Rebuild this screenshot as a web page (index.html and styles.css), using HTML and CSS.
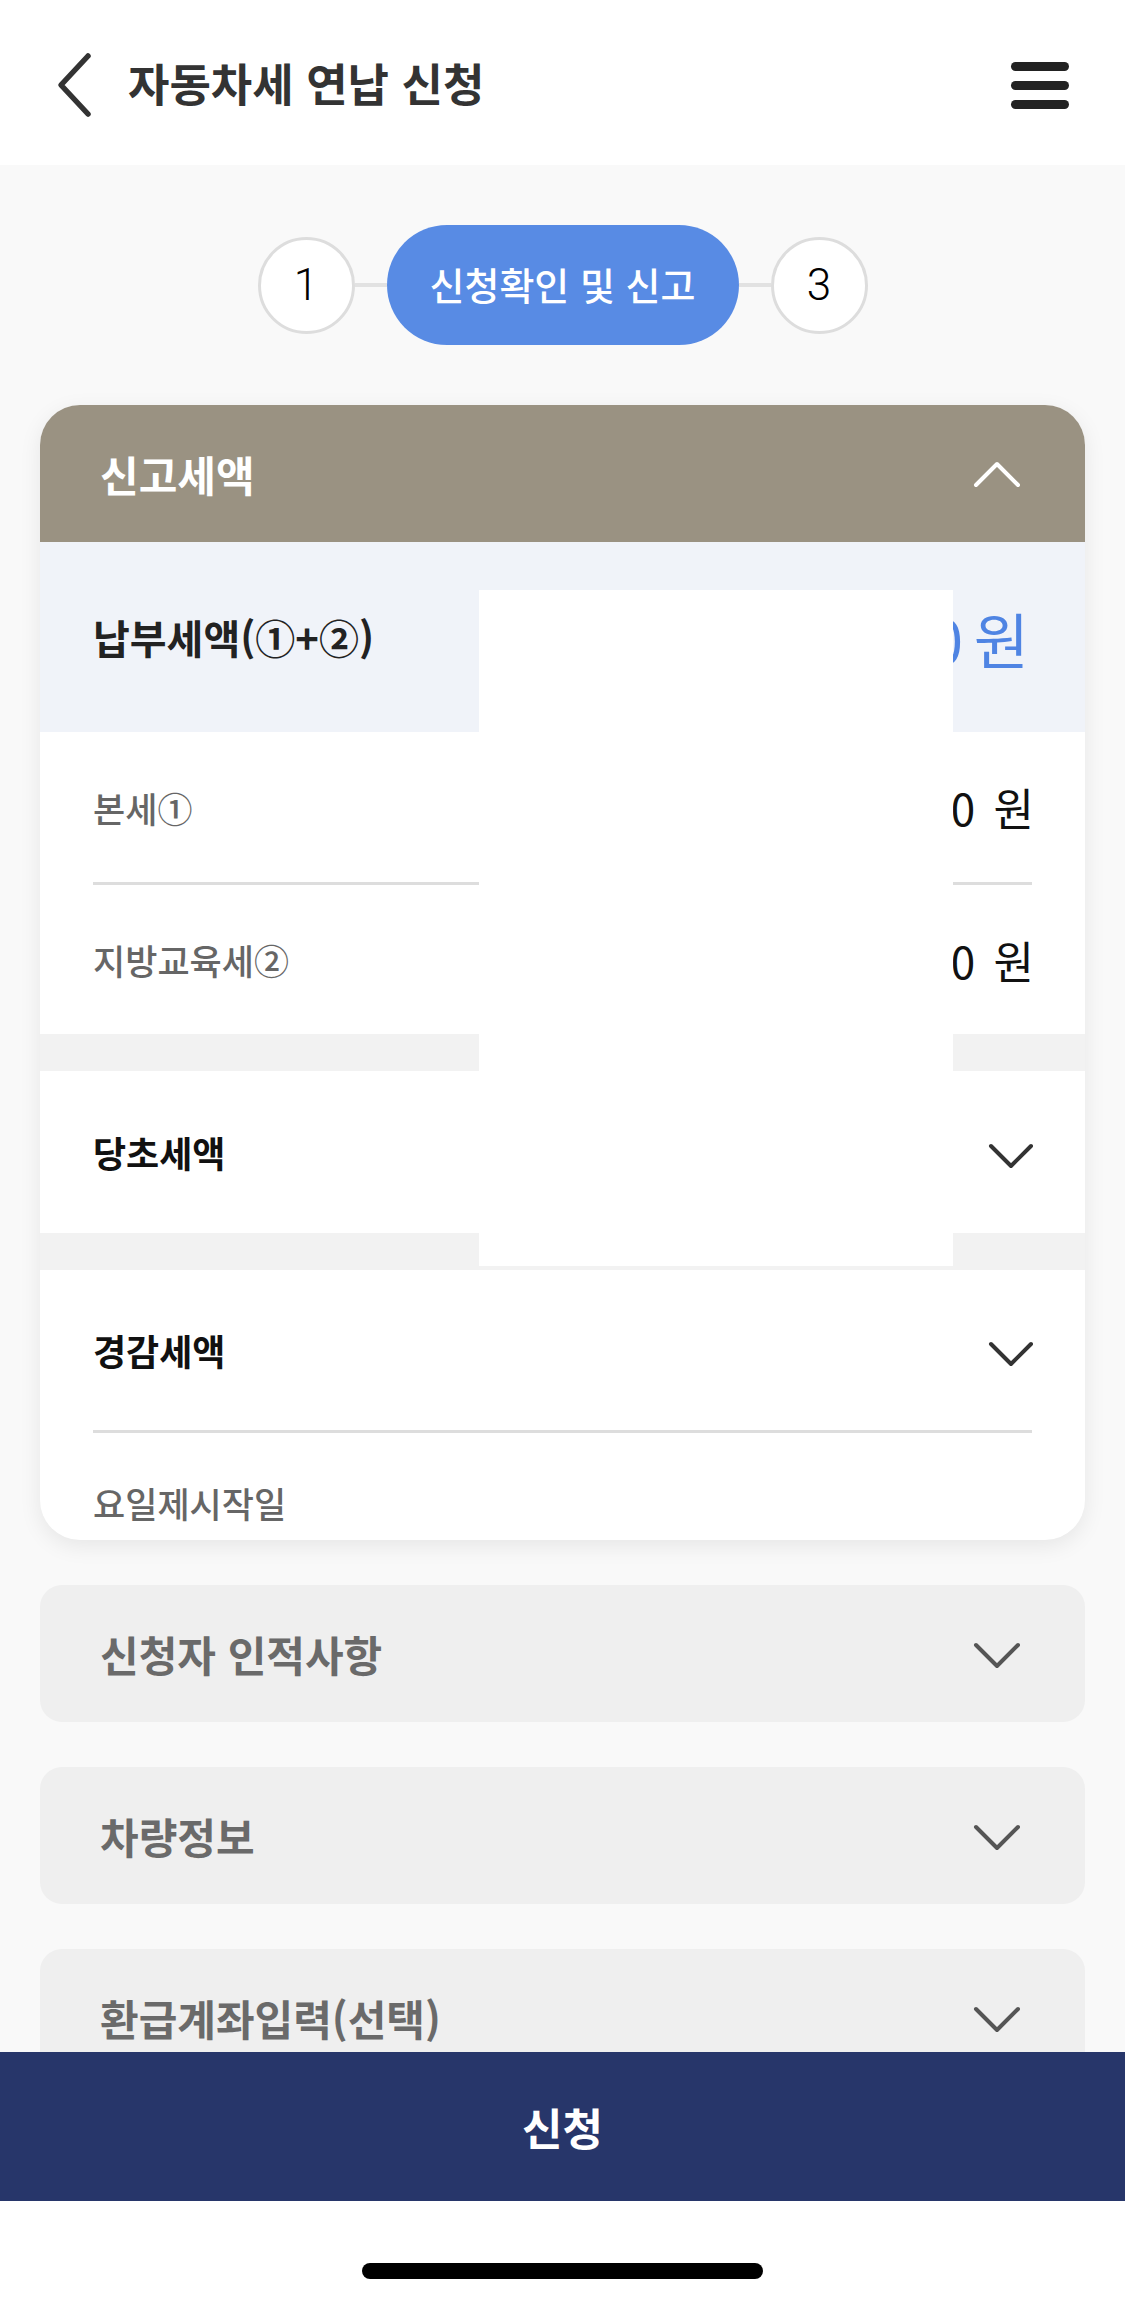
FILE: index.html
```html
<!DOCTYPE html>
<html lang="ko">
<head>
    <meta charset="UTF-8">
    <meta name="viewport" content="width=device-width, initial-scale=1.0">
    <title>자동차세 연납 신청</title>
    <link rel="stylesheet" href="styles.css">
</head>
<body>
    <header class="top-bar">
        <svg class="back" width="36" height="66" viewBox="0 0 36 66">
            <path d="M32 4 L5 33 L32 62" fill="none" stroke="#333" stroke-width="5.5" stroke-linecap="round" stroke-linejoin="round"/>
        </svg>
        <h1 class="title">자동차세 연납 신청</h1>
        <div class="menu">
            <span></span><span></span><span></span>
        </div>
    </header>

    <main class="content">
        <div class="stepper">
            <div class="step">1</div>
            <div class="step-line"></div>
            <div class="step active">신청확인 및 신고</div>
            <div class="step-line"></div>
            <div class="step">3</div>
        </div>

        <section class="card">
            <div class="card-head">
                <span>신고세액</span>
                <svg width="48" height="28" viewBox="0 0 48 28">
                    <path d="M3 25 L24 4 L45 25" fill="none" stroke="#fff" stroke-width="4" stroke-linecap="round" stroke-linejoin="round"/>
                </svg>
            </div>
            <div class="total-row">
                <span class="label">납부세액(①+②)</span>
                <span class="value">0 원</span>
            </div>
            <div class="detail">
                <div class="detail-row">
                    <span>본세①</span>
                    <span class="amount">0 원</span>
                </div>
                <div class="detail-row">
                    <span>지방교육세②</span>
                    <span class="amount">0 원</span>
                </div>
            </div>
            <div class="gap"></div>
            <div class="fold-row">
                <span>당초세액</span>
                <svg width="46" height="28" viewBox="0 0 46 28">
                    <path d="M3 4 L23 24 L43 4" fill="none" stroke="#333" stroke-width="4" stroke-linecap="round" stroke-linejoin="round"/>
                </svg>
            </div>
            <div class="gap"></div>
            <div class="fold-row with-line">
                <span>경감세액</span>
                <svg width="46" height="28" viewBox="0 0 46 28">
                    <path d="M3 4 L23 24 L43 4" fill="none" stroke="#333" stroke-width="4" stroke-linecap="round" stroke-linejoin="round"/>
                </svg>
            </div>
            <div class="sub-label">요일제시작일</div>
            <div class="mask"></div>
        </section>

        <section class="section">
            <span>신청자 인적사항</span>
            <svg width="48" height="28" viewBox="0 0 48 28">
                <path d="M3 3 L24 24 L45 3" fill="none" stroke="#555" stroke-width="4" stroke-linecap="round" stroke-linejoin="round"/>
            </svg>
        </section>
        <section class="section">
            <span>차량정보</span>
            <svg width="48" height="28" viewBox="0 0 48 28">
                <path d="M3 3 L24 24 L45 3" fill="none" stroke="#555" stroke-width="4" stroke-linecap="round" stroke-linejoin="round"/>
            </svg>
        </section>
        <section class="section">
            <span>환급계좌입력(선택)</span>
            <svg width="48" height="28" viewBox="0 0 48 28">
                <path d="M3 3 L24 24 L45 3" fill="none" stroke="#555" stroke-width="4" stroke-linecap="round" stroke-linejoin="round"/>
            </svg>
        </section>
    </main>

    <footer class="bottom">
        <button class="submit">신청</button>
        <div class="home-area"><div class="home-bar"></div></div>
    </footer>
</body>
</html>
```

FILE: styles.css
```css
body {
    margin: 0;
    font-family: "Noto Sans CJK KR", "Noto Sans", sans-serif;
    background-color: #f9f9f9;
    color: #222;
}
.top-bar {
    height: 165px;
    background: #ffffff;
    display: flex;
    align-items: center;
    padding: 0 56px 0 56px;
    box-sizing: border-box;
}
.back {
    margin-top: 4px;
}
.title {
    margin: 0 0 0 36px;
    font-size: 45px;
    font-weight: 700;
    color: #333;
    flex: 1;
}
.menu {
    width: 58px;
    display: flex;
    flex-direction: column;
    gap: 10px;
    margin-top: 6px;
}
.menu span {
    height: 9px;
    border-radius: 5px;
    background: #222;
}
.content {
    padding: 60px 40px 300px;
}
.stepper {
    display: flex;
    justify-content: center;
    align-items: center;
}
.step {
    width: 97px;
    height: 97px;
    box-sizing: border-box;
    border: 3px solid #dddddd;
    border-radius: 50%;
    background: #ffffff;
    display: flex;
    justify-content: center;
    align-items: center;
    font-family: Roboto, "Liberation Sans", sans-serif;
    font-weight: 300;
    font-size: 44px;
    color: #000;
}
.step.active {
    width: 352px;
    height: 120px;
    border: none;
    border-radius: 60px;
    background: #588be4;
    color: #ffffff;
    font-family: "Noto Sans CJK KR", sans-serif;
    font-weight: 500;
    font-size: 38px;
    padding-bottom: 4px;
}
.step-line {
    width: 32px;
    height: 4px;
    background: #e2e2e2;
}
.card {
    position: relative;
    margin-top: 60px;
    background: #ffffff;
    border-radius: 40px;
    overflow: hidden;
    box-shadow: 0 6px 22px rgba(0, 0, 0, 0.08);
}
.card-head {
    height: 137px;
    background: #9a9282;
    color: #ffffff;
    display: flex;
    align-items: center;
    justify-content: space-between;
    padding: 0 64px 0 60px;
    font-size: 42px;
    font-weight: 700;
}
.total-row {
    height: 190px;
    background: #f0f3f9;
    display: flex;
    align-items: center;
    justify-content: space-between;
    padding: 0 56px 0 53px;
}
.total-row .label {
    font-size: 40px;
    font-weight: 700;
    color: #222;
}
.total-row .value {
    font-size: 60px;
    color: #4f84e3;
    word-spacing: -6px;
}
.detail {
    padding: 0 53px;
}
.detail-row {
    height: 150px;
    display: flex;
    align-items: center;
    justify-content: space-between;
    font-size: 35px;
    font-weight: 500;
    color: #666;
}
.detail-row + .detail-row {
    border-top: 3px solid #dddddd;
    height: 149px;
}
.detail-row .amount {
    font-size: 44px;
    font-weight: 400;
    color: #111;
    word-spacing: 6px;
    margin-right: -2px;
}
.gap {
    height: 37px;
    background: #f2f2f2;
}
.fold-row {
    height: 162px;
    margin: 0 53px;
    display: flex;
    align-items: center;
    justify-content: space-between;
    font-size: 36px;
    font-weight: 700;
    color: #111;
}
.fold-row.with-line {
    height: 160px;
    border-bottom: 3px solid #dddddd;
}
.fold-row svg {
    margin-right: -2px;
    margin-top: 8px;
}
.sub-label {
    height: 107px;
    box-sizing: border-box;
    padding: 44px 53px 0;
    font-size: 35px;
    font-weight: 500;
    color: #666;
}
.mask {
    position: absolute;
    left: 439px;
    top: 185px;
    width: 474px;
    height: 676px;
    background: #ffffff;
}
.section {
    margin-top: 45px;
    height: 137px;
    border-radius: 22px;
    background: #efefef;
    display: flex;
    align-items: center;
    justify-content: space-between;
    padding: 0 64px 0 60px;
    font-size: 42px;
    font-weight: 700;
    color: #6a6a6a;
}
.section svg {
    margin-top: 4px;
}
.bottom {
    position: fixed;
    left: 0;
    right: 0;
    bottom: 0;
}
.submit {
    display: block;
    width: 100%;
    height: 149px;
    border: none;
    background: #27366a;
    color: #ffffff;
    font-family: "Noto Sans CJK KR", sans-serif;
    font-size: 44px;
    font-weight: 700;
    cursor: pointer;
}
.home-area {
    height: 103px;
    background: #ffffff;
    display: flex;
    justify-content: center;
    padding-top: 62px;
    box-sizing: border-box;
}
.home-bar {
    width: 401px;
    height: 16px;
    border-radius: 8px;
    background: #000000;
}
```
